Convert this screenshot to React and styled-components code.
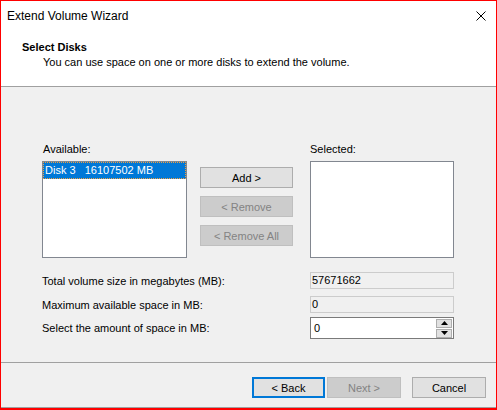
import React from "react"
import styled, { createGlobalStyle } from "styled-components"

const GlobalStyle = createGlobalStyle`
  html, body {
    margin: 0;
    padding: 0;
    background: #ffffff;
  }
  body {
    font-family: "Liberation Sans", Arial, sans-serif;
    font-size: 11px;
    color: #000000;
  }
`

const Window = styled.div`
  width: 497px;
  height: 410px;
  box-sizing: border-box;
  border: 1px solid #ff0000;
  border-bottom-width: 2px;
  display: flex;
  flex-direction: column;
  background: #f0f0f0;
  overflow: hidden;
`

const TitleBar = styled.div`
  height: 29px;
  background: #ffffff;
  display: flex;
  align-items: center;
  justify-content: space-between;
  padding: 0 10px 0 6px;
  font-size: 12px;
  color: #000000;
`

const Header = styled.div`
  height: 57px;
  background: #ffffff;
  border-bottom: 1px solid #a0a0a0;
  display: flex;
  flex-direction: column;
  padding: 10px 0 0 21px;
  box-sizing: border-box;
`

const HeaderTitle = styled.div`
  font-weight: bold;
  font-size: 11px;
  line-height: 14px;
`

const HeaderText = styled.div`
  padding-left: 21px;
  line-height: 14px;
  margin-top: 1px;
`

const Body = styled.div`
  flex: 1;
  padding: 56px 0 0 40px;
  display: flex;
  flex-direction: column;
`

const Pickers = styled.div`
  display: grid;
  grid-template-columns: 146px 123px 144px;
  grid-template-rows: 13px 97px;
  row-gap: 5px;
`

const Label = styled.div`
  line-height: 13px;
  margin-left: ${(p) => p.$indent || 0}px;
`

const ListBox = styled.div`
  box-sizing: border-box;
  height: 97px;
  background: #ffffff;
  border: 1px solid #828790;
  margin-left: ${(p) => p.$indent || 0}px;
`

const ListItem = styled.div`
  height: 17px;
  line-height: 15px;
  box-sizing: border-box;
  background: #0078d7;
  color: #ffffff;
  border: 1px dotted #f0a040;
  padding-left: 1px;
  white-space: pre;
`

const MoveButtons = styled.div`
  display: flex;
  flex-direction: column;
  gap: 8px;
  padding-top: 6px;
  margin-left: 13px;
`

const Button = styled.div`
  box-sizing: border-box;
  width: ${(p) => p.$width || 93}px;
  height: 21px;
  display: flex;
  align-items: center;
  justify-content: center;
  background: ${(p) => (p.$disabled ? "#cccccc" : "#e1e1e1")};
  border: ${(p) =>
    p.$focused
      ? "2px solid #0078d7"
      : p.$disabled
      ? "1px solid #bfbfbf"
      : "1px solid #adadad"};
  color: ${(p) => (p.$disabled ? "#838383" : "#000000")};
`

const Fields = styled.div`
  display: flex;
  flex-direction: column;
  margin-top: 14px;
  padding-left: 1px;
`

const FieldRow = styled.div`
  display: flex;
  align-items: center;
  margin-top: ${(p) => p.$gap || 0}px;
`

const FieldLabel = styled.div`
  width: 268px;
`

const ReadField = styled.div`
  box-sizing: border-box;
  width: 144px;
  height: 17px;
  line-height: 15px;
  border: 1px solid #cccccc;
  background: #f0f0f0;
  padding-left: 1px;
`

const SpinBox = styled.div`
  box-sizing: border-box;
  width: 144px;
  height: 22px;
  border: 1px solid #7a7a7a;
  background: #ffffff;
  display: flex;
  align-items: center;
  justify-content: space-between;
  padding: 0 0 0 3px;
`

const SpinButtons = styled.div`
  display: flex;
  flex-direction: column;
  gap: 1px;
  margin-right: 1px;
`

const SpinButton = styled.div`
  box-sizing: border-box;
  width: 16px;
  height: 9px;
  background: #e1e1e1;
  border: 1px solid #adadad;
  display: flex;
  align-items: center;
  justify-content: center;
`

const Footer = styled.div`
  height: 46px;
  border-top: 1px solid #a0a0a0;
  border-bottom: 1px solid #a0a0a0;
  box-sizing: border-box;
  display: flex;
  justify-content: flex-end;
  align-items: flex-start;
  padding: 14px 10px 0 0;
`

const NavGroup = styled.div`
  display: flex;
  gap: 2px;
  margin-right: 11px;
`

const Arrow = ({ up }) => (
  <svg width="7" height="4" viewBox="0 0 7 4">
    <path d={up ? "M0 4 L3.5 0 L7 4 Z" : "M0 0 L3.5 4 L7 0 Z"} fill="#000" />
  </svg>
)

const App = () => (
  <>
    <GlobalStyle />
    <Window>
      <TitleBar>
        <span>Extend Volume Wizard</span>
        <svg width="10" height="10" viewBox="0 0 10 10">
          <path d="M0.5 0.5 L9.5 9.5 M9.5 0.5 L0.5 9.5" stroke="#000" strokeWidth="1" />
        </svg>
      </TitleBar>
      <Header>
        <HeaderTitle>Select Disks</HeaderTitle>
        <HeaderText>You can use space on one or more disks to extend the volume.</HeaderText>
      </Header>
      <Body>
        <Pickers>
          <Label $indent={2}>Available:</Label>
          <div />
          <Label>Selected:</Label>
          <ListBox $indent={1}>
            <ListItem>{"Disk 3   16107502 MB"}</ListItem>
          </ListBox>
          <MoveButtons>
            <Button>Add &gt;</Button>
            <Button $disabled>&lt; Remove</Button>
            <Button $disabled>&lt; Remove All</Button>
          </MoveButtons>
          <ListBox />
        </Pickers>
        <Fields>
          <FieldRow>
            <FieldLabel>Total volume size in megabytes (MB):</FieldLabel>
            <ReadField>57671662</ReadField>
          </FieldRow>
          <FieldRow $gap={7}>
            <FieldLabel>Maximum available space in MB:</FieldLabel>
            <ReadField>0</ReadField>
          </FieldRow>
          <FieldRow $gap={4}>
            <FieldLabel>Select the amount of space in MB:</FieldLabel>
            <SpinBox>
              <span>0</span>
              <SpinButtons>
                <SpinButton>
                  <Arrow up />
                </SpinButton>
                <SpinButton>
                  <Arrow />
                </SpinButton>
              </SpinButtons>
            </SpinBox>
          </FieldRow>
        </Fields>
      </Body>
      <Footer>
        <NavGroup>
          <Button $width={73} $focused>&lt; Back</Button>
          <Button $width={74} $disabled>Next &gt;</Button>
        </NavGroup>
        <Button $width={74}>Cancel</Button>
      </Footer>
    </Window>
  </>
)

export default App
